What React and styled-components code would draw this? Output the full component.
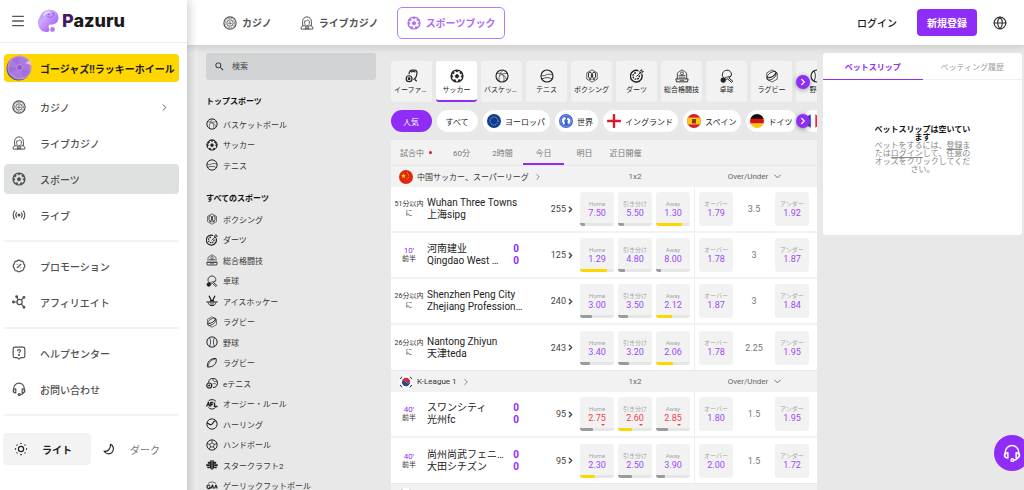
import React from 'react';
import styled, { createGlobalStyle, css } from 'styled-components';
import { Menu, Globe, ChevronRight, ChevronDown, BadgePercent } from 'lucide-react';
import { MdSearch } from 'react-icons/md';

const PURPLE = '#8f2cf5';
const GOLD = '#ffd600';

const GlobalStyle = createGlobalStyle`
    *{
        box-sizing: border-box;
    }
    body{
        margin: 0;
        background: #e8e8e8;
        color: #2b2b2b;
        font-family: Roboto, "Noto Sans CJK JP", "Noto Sans CJK SC", sans-serif;
        font-size: 8px;
        overflow: hidden;
    }
    button, input{
        font: inherit;
        color: inherit;
        border: 0;
        padding: 0;
        background: none;
    }
    button{
        cursor: pointer;
    }
    a{
        color: inherit;
        text-decoration: none;
    }
    ul{
        list-style: none;
        margin: 0;
        padding: 0;
    }
    svg{
        display: block;
        flex-shrink: 0;
    }
`;

/* ---------- icons ---------- */

const hex = 'M12 1.500l9 5.200v10.600l-9 5.200-9-5.200V6.700z';

const shapes = {
    chip: (
        <>
            <circle cx="12" cy="12" r="10.500" />
            <circle cx="12" cy="12" r="8" strokeWidth="1.300" strokeDasharray="2.600 1.600" />
            <circle cx="12" cy="12" r="5.500" strokeWidth="1.500" />
            <path d="M12 9l2.500 4h-5zM12 13v2" strokeWidth="1.200" />
        </>
    ),
    dealer: (
        <>
            <path d="M4.500 17V9a7.500 7.500 0 0 1 15 0v8" strokeWidth="1.700" />
            <path d="M8 13V8.500c2 .5 4.500-.5 5.500-2 .5 1.200 1.500 2 2.500 2V13c0 2-2 3.500-4 3.500S8 15 8 13z" strokeWidth="1.500" />
            <path d="M2 22.500v-3c0-1.500 2-2.500 5-3l5 2.500 5-2.500c3 .5 5 1.500 5 3v3z" strokeWidth="1.700" />
            <path d="M9 19.500l3 1.500 3-1.500v3l-3-1.500-3 1.500z" fill="currentColor" strokeWidth="1" />
        </>
    ),
    soccer: (
        <>
            <circle cx="12" cy="12" r="10.300" />
            <path d="M12 9.200l3 2.200-1.200 3.500h-3.600L9 11.400z" fill="currentColor" strokeWidth="1.400" />
            <path d="M8.500 2.500h7L12 5.200zM21.500 10l-.2 5-2.500-2.300zM2.500 10l.2 5 2.500-2.300zM6 19l4 2.500-1-3.200zM18 19l-4 2.500 1-3.200z" fill="currentColor" strokeWidth="1.400" />
            <path d="M4 6.500l2.500-2 .5 2.500-2 2zM20 6.500l-2.500-2L17 7l2 2z" fill="currentColor" strokeWidth="1.400" />
        </>
    ),
    live: (
        <>
            <path d="M5 4.500c-4 4-4 11 0 15M19 4.500c4 4 4 11 0 15M8.500 7.500c-2.300 2.500-2.300 6.500 0 9M15.500 7.500c2.300 2.500 2.300 6.500 0 9" />
            <circle cx="12" cy="12" r="1.600" fill="currentColor" />
        </>
    ),
    affiliate: (
        <>
            <circle cx="13" cy="12" r="4.500" />
            <path d="M8.500 12H3M10.500 8L8.500 4M16 8.500l4-4M16 15.500l4 4.500" />
            <circle cx="2.500" cy="12" r="1.500" fill="currentColor" />
            <circle cx="8" cy="3" r="1.500" fill="currentColor" />
            <circle cx="20.500" cy="4" r="1.500" fill="currentColor" />
            <circle cx="20.500" cy="21" r="1.500" fill="currentColor" />
        </>
    ),
    help: (
        <>
            <path d="M5 2h14a3 3 0 0 1 3 3v12a3 3 0 0 1-3 3h-4l-3 2.500L9 20H5a3 3 0 0 1-3-3V5a3 3 0 0 1 3-3z" />
            <path d="M9.500 9c0-3.500 5-3.500 5-.5 0 2-2.500 2-2.500 4" />
            <circle cx="12" cy="15.500" r=".8" fill="currentColor" />
        </>
    ),
    headset: (
        <>
            <path d="M3 15v-4a9 9 0 0 1 18 0v4" />
            <path d="M6.500 11.500v7c-3 0-4.500-1.500-4.500-3.500s1.500-3.500 4.500-3.500zM17.500 11.500v7c3 0 4.500-1.500 4.500-3.500s-1.500-3.500-4.500-3.500z" />
            <path d="M20 18c-1 2.500-3 3.500-6 3.500" />
            <circle cx="12.500" cy="21.500" r="1.700" />
        </>
    ),
    sun: (
        <>
            <circle cx="12" cy="12" r="4.500" />
            <path d="M12 1.500v2M12 20.500v2M1.500 12h2M20.500 12h2M4.600 4.600l1.200 1.200M18.200 18.200l1.200 1.200M4.600 19.400l1.200-1.200M18.200 5.800l1.200-1.200" strokeWidth="2.600" />
        </>
    ),
    moon: <path d="M14.500 4a8.500 8.500 0 1 1-11 11.500c6 2 12-4 11-11.500z" />,
    basketball: (
        <>
            <circle cx="12" cy="12" r="10.300" />
            <path d="M3 8c5-2 14 1 17 10M14 2c-5 3-8 10-7 19M9 11c4-3 8-4 12-3M13 10c3 3 3 8 2 11" strokeWidth="1.100" />
        </>
    ),
    tennis: (
        <>
            <circle cx="12" cy="12" r="10.300" />
            <path d="M2 10c5 4 8-1 12-1 3 0 6 0 8 2M3.500 17c5-3 12-3 17 0" strokeWidth="1.300" />
        </>
    ),
    boxing: (
        <>
            <path d={hex} strokeWidth="1.200" />
            <path d="M6 7.500c0-2.500 5-2.500 5 0v7c0 2-5 2-5-1zM13 7.500c0-2.500 5-2.500 5 0v6c0 3-5 3-5 1z" strokeWidth="1.600" />
            <path d="M7 17.500h4M13 17.500h4" />
        </>
    ),
    darts: (
        <>
            <path d="M20 8.500A10 10 0 1 1 14.500 3" strokeWidth="2.400" />
            <path d="M16 11a5.500 5.500 0 1 1-4.500-4.500" strokeWidth="2.400" strokeDasharray="3 1.500" />
            <path d="M11 13l8-8M17 4l3-3v3h3l-3 3h-3z" strokeWidth="1.600" />
        </>
    ),
    mma: (
        <>
            <path d="M4 17V7l4-3 4-2.500L16 4l4 3v10" strokeWidth="1.300" />
            <path d="M1.500 17h21l-1 5h-19z" strokeWidth="1.600" />
            <path d="M6 11h12M6 14h12M8 19.500h8" strokeWidth="1.200" />
            <circle cx="12" cy="7.500" r="2.500" strokeWidth="1.300" />
        </>
    ),
    pingpong: (
        <>
            <path d="M6 15C1 9 6 2 12 2s9 6 7 10l-4 3 7 6-2 2-7-6c-2 1-4 1-6-1z" strokeWidth="1.700" />
            <path d="M8 15L19 12" strokeWidth="1.300" />
            <circle cx="5.500" cy="19" r="3.500" fill="currentColor" />
        </>
    ),
    hockey: (
        <>
            <path d="M6 1.500l5 10h5M18 1.500l-5 10H8" strokeWidth="2.600" />
            <path d="M1 14h22" strokeWidth="2.400" />
            <path d="M5 16c0 7 14 7 14 0M8 18h8M8 21h8" strokeWidth="1.600" />
        </>
    ),
    league: (
        <>
            <path d={hex} strokeWidth="1.200" />
            <path d="M4 16C3 9 11 4 18 4c4 6-3 14-11 15-2 0-3-1-3-3z" strokeWidth="1.600" />
            <path d="M5 15c6 0 12-4 14-9" />
        </>
    ),
    baseball: (
        <>
            <circle cx="12" cy="12" r="10.300" />
            <path d="M7 3.500c3 5 3 12 0 17M17 3.500c-3 5-3 12 0 17" strokeWidth="1.500" />
        </>
    ),
    rugby: (
        <>
            <path d="M3 20C1 11 9 2 20 3c3 9-5 18-17 17z" />
            <path d="M5 19C4 12 10 5 18 4.500" strokeWidth="1.300" />
        </>
    ),
    etennis: (
        <>
            <path d="M5 11a9 9 0 1 1 9 10" />
            <path d="M14 3c-1 5 2 7 8 6M13 14c3-2 6-1 8 1" strokeWidth="1.300" />
            <circle cx="6.500" cy="17" r="5" strokeWidth="2.400" />
            <path d="M4.500 17h4M6.500 15v4" />
        </>
    ),
    esoccer: (
        <>
            <path d="M7 9c0-4 2-7 6-7h4c4 0 4 4 3 8-1 5-2 7-6 8" />
            <path d="M10 5c3-1 5-1 8 0M17 18l3 3" />
            <circle cx="7" cy="16.500" r="5" />
            <circle cx="7" cy="16.500" r="1.500" fill="currentColor" />
        </>
    ),
    afl: (
        <>
            <path d="M4 7c4-5 12-5 16 0M5 19c4 4 10 4 14 0" />
            <path d="M1 17l4-8 2 8M9.500 17V9h5M9.500 13h4M17 9v8h6" strokeWidth="2.800" />
        </>
    ),
    hurling: (
        <>
            <circle cx="12" cy="12" r="10.300" />
            <path d="M2 11c5-1 5 4 9 2s3-8 9-7" strokeWidth="2.400" />
        </>
    ),
    handball: (
        <>
            <circle cx="12" cy="12" r="10.300" />
            <path d="M12 7.500l4.500 3.200-1.700 5.200H9.200L7.500 10.700zM12 2v5.500M22 9l-5.500 1.700M18 20l-3.200-4M6 20l3.200-4M2 9l5.500 1.700" strokeWidth="1.600" />
        </>
    ),
    starcraft: (
        <path d="M9 3h2v18L8 18V9H4V6h5zM15 3h-2v18l3-3V9h4V6h-5zM1 11h6v3H1zM17 11h6v3h-6zM3 16h4v2H3zM17 16h4v2h-4z" fill="currentColor" strokeWidth="1" />
    ),
    gaa: (
        <>
            <path d="M4 7c4-4 12-4 16 0M6 21c4 2 8 2 12 0" strokeWidth="1.300" />
            <path d="M8 11c-4-2-6 0-6 3s4 4 6 2v-2H6M10 17l3-7 2 7M17 17l3-7 2.500 7" strokeWidth="2.400" />
        </>
    ),
};

const Icon = ({ name, size = 12 }) => (
    <svg width={size} height={size} viewBox="0 0 24 24" fill="none" stroke="currentColor" strokeWidth="2" strokeLinejoin="round" aria-hidden="true">
        {shapes[name]}
    </svg>
);

const flags = {
    eu: (
        <>
            <rect width="14" height="14" fill="#0b3b9c" />
            <circle cx="7" cy="7" r="4" fill="none" stroke="#e8c93a" strokeWidth="1" strokeDasharray="1 1.100" />
        </>
    ),
    world: (
        <>
            <rect width="14" height="14" fill="#3b66d6" />
            <path d="M3 5l2-2 2 1-1 2-1 1 1 2-1 2-2-3zM8.500 3.500L11 5l.5 2.500L10 10.500 8.500 8.500l.5-2-1-1z" fill="#fff" />
            <circle cx="7" cy="7" r="5.500" fill="none" stroke="#9db5f0" strokeWidth=".6" />
        </>
    ),
    england: (
        <>
            <rect width="14" height="14" fill="#fff" />
            <path d="M5.800 0h2.400v14H5.800zM0 5.800h14v2.400H0z" fill="#d8192f" />
        </>
    ),
    spain: (
        <>
            <rect width="14" height="14" fill="#d8192f" />
            <rect y="3.500" width="14" height="7" fill="#fbc712" />
            <path d="M5 5h4v4.500H5z" fill="#8c3b14" />
        </>
    ),
    germany: (
        <>
            <rect width="14" height="5" fill="#111" />
            <rect y="4.700" width="14" height="5" fill="#dd1010" />
            <rect y="9.300" width="14" height="5" fill="#fbc712" />
        </>
    ),
    france: (
        <>
            <rect width="14" height="14" fill="#fff" />
            <rect width="4.700" height="14" fill="#2346a0" />
            <rect x="9.300" width="4.700" height="14" fill="#f0283c" />
        </>
    ),
    china: (
        <>
            <rect width="14" height="14" fill="#de2910" />
            <path d="M4.500 3.500l.7 1.500 1.600.2-1.200 1.100.3 1.600-1.400-.8-1.400.8.300-1.600-1.200-1.100 1.600-.2z" fill="#ffde00" />
            <path d="M8 2.500h1v1H8zM9 4.500h1v1H9zM9 7h1v1H9zM7.500 8.500h1v1h-1z" fill="#ffb000" />
        </>
    ),
    korea: (
        <>
            <rect width="14" height="14" fill="#fff" />
            <path d="M2.800 7a4.200 4.200 0 0 1 8.400 0c-1 2-3 1.500-4.200 0s-3.200-2-4.200 0z" fill="#cd2e3a" />
            <path d="M2.800 7c1-2 3-1.500 4.200 0s3.200 2 4.200 0a4.200 4.200 0 0 1-8.400 0z" fill="#204a9c" />
            <path d="M1 4l2-2.500M11 1.500L13 4M1 10l2 2.500M11 12.500l2-2.500" stroke="#222" strokeWidth="1.200" />
        </>
    ),
};

const FlagSvg = styled.svg`
    width: 14px;
    height: 14px;
    border-radius: 50%;
`;

const Flag = ({ name }) => (
    <FlagSvg viewBox="0 0 14 14" aria-hidden="true">
        {flags[name]}
    </FlagSvg>
);

const LogoMark = () => (
    <svg width="22" height="24" viewBox="0 0 22 24" aria-hidden="true">
        <defs>
            <linearGradient id="blob" x1="0" y1="0" x2="1" y2="1">
                <stop offset="0" stopColor="#8ea4ff" />
                <stop offset=".35" stopColor="#d0a6ff" />
                <stop offset=".7" stopColor="#b072f5" />
                <stop offset="1" stopColor="#8a3be8" />
            </linearGradient>
        </defs>
        <path d="M11 1c6-1 10.500 2.500 10.500 7.500S18 15.500 14.500 15.500c-3 0-3.500 1.500-2.500 3.500s0 4-2 4C4 23.500 1 18.500 1 13.500 1 10 2.500 9 3.500 6.500S7 1.500 11 1z" fill="url(#blob)" />
        <path d="M7 6c1-2 3-3 5-3" stroke="#f1e4ff" strokeWidth="1.500" fill="none" strokeLinecap="round" />
        <path d="M10 7c2 2 5 2 7-1" stroke="#8a5ae0" strokeWidth="1" fill="none" strokeLinecap="round" />
        <circle cx="11.500" cy="5.500" r="1" fill="#7a6ae0" />
        <circle cx="16" cy="4.500" r="1" fill="#7a6ae0" />
        <circle cx="15.500" cy="20.500" r="2.400" fill="#b878f5" />
    </svg>
);

const Wheel = () => (
    <svg width="26" height="26" viewBox="0 0 26 26" aria-hidden="true">
        <circle cx="12.500" cy="13.500" r="12" fill="#5c55b0" />
        <circle cx="13.500" cy="12.500" r="12" fill="#b98fd8" />
        <circle cx="13.500" cy="12.500" r="10.800" fill="#a97ae0" stroke="#d3a988" strokeWidth="1" strokeDasharray="1 1" />
        <path d="M13.500 12.500L6 5a11 11 0 0 1 7.500-3zM13.500 12.500L24 16a11 11 0 0 1-6 6zM13.500 12.500L4 18a11 11 0 0 1-1.500-6z" fill="#9f70e2" />
        <circle cx="13.500" cy="12.500" r="3" fill="#8a5ad8" stroke="#d8a0c8" strokeWidth=".8" />
        <path d="M19 8l6-3v5z" fill="#e9c6d8" />
    </svg>
);

/* ---------- layout ---------- */

const Page = styled.div`
    display: grid;
    grid-template-columns: 187px minmax(0, 1fr);
    height: 100vh;
    overflow: hidden;
`;

const Sidebar = styled.aside`
    position: relative;
    z-index: 2;
    background: #fff;
    box-shadow: 2px 0 10px rgba(0, 0, 0, 0.2);
`;

const Brand = styled.div`
    display: flex;
    align-items: center;
    height: 43px;
    padding-left: 10px;
    border-bottom: 1px solid #eee;
    color: #555;
`;

const BrandLink = styled.a`
    display: flex;
    align-items: center;
    gap: 3px;
    margin-left: 11px;
    color: #1a1a1a;
    font: 800 18px/24px Inter, sans-serif;

    span::first-letter{
        color: #431a63;
    }
    span{
        display: block;
    }
`;

const Banner = styled.a`
    display: flex;
    align-items: center;
    gap: 8px;
    height: 28px;
    margin: 11px 8px 10px 4px;
    padding-left: 2px;
    border-radius: 4px;
    background: ${GOLD};
    color: #1d1d1d;
    font-size: 10px;
    font-weight: 700;
    white-space: nowrap;
`;

const NavGroup = styled.nav`
    display: grid;
    gap: 6px;
    margin: 0 8px 9px 4px;
    padding-bottom: 10px;
    border-bottom: 2px solid #f2f2f2;
`;

const NavItem = styled.a`
    display: flex;
    align-items: center;
    gap: 14px;
    height: 30px;
    padding: 0 9px 0 8px;
    border-radius: 4px;
    background: ${(p) => (p.$active ? '#dfe1e0' : 'none')};
    color: #505050;
    font-size: 10px;
    font-weight: 500;

    span{
        flex: 1;
    }
`;

const ThemeSwitch = styled.div`
    display: flex;
    margin: 17px 8px 0 3px;
`;

const ThemeButton = styled.button`
    display: flex;
    align-items: center;
    gap: 14px;
    width: 88px;
    height: 32px;
    padding-left: 11px;
    border-radius: 4px;
    background: ${(p) => (p.$active ? '#f3f3f3' : 'none')};
    color: #222;
    font-size: 10px;
    font-weight: ${(p) => (p.$active ? 700 : 400)};

    span{
        color: ${(p) => (p.$active ? '#222' : '#777')};
    }
`;

const Main = styled.div`
    display: flex;
    flex-direction: column;
    min-width: 0;
`;

const TopBar = styled.header`
    position: relative;
    z-index: 1;
    display: flex;
    align-items: center;
    flex-shrink: 0;
    height: 45px;
    padding: 0 17px 0 26px;
    background: #fff;
    box-shadow: 0 2px 8px rgba(0, 0, 0, 0.14);
`;

const TopLink = styled.a`
    display: flex;
    align-items: center;
    gap: 5px;
    height: 32px;
    padding: 0 9px;
    border: 1px solid transparent;
    border-radius: 5px;
    margin-right: 8px;
    color: #555;
    font-size: 10px;
    font-weight: 700;

    ${(p) => p.$active && css`
        border-color: #b57bfa;
        color: #ad6bf9;
    `}
`;

const Account = styled.div`
    display: flex;
    align-items: center;
    gap: 16px;
    margin-left: auto;
    color: #333;
`;

const LoginButton = styled.button`
    padding: 0 4px;
    color: #1a1a1a;
    font-size: 10px;
    font-weight: 500;
`;

const SignUpButton = styled.button`
    height: 27px;
    padding: 0 10px;
    border-radius: 4px;
    background: ${PURPLE};
    color: #fff;
    font-size: 10px;
    font-weight: 700;
`;

const Content = styled.main`
    display: flex;
    align-items: flex-start;
    flex: 1;
    min-height: 0;
    padding: 8px 2px 0 8px;
    border-left: 11px solid #eee;
`;

/* ---------- sports menu ---------- */

const SportsMenu = styled.aside`
    width: 170px;
    flex-shrink: 0;
    margin-right: 15px;
`;

const SearchBox = styled.label`
    display: flex;
    align-items: center;
    gap: 7px;
    height: 27px;
    padding: 0 8px;
    border-radius: 3px;
    background: #d1d3d4;

    input{
        width: 100%;
        outline: 0;
    }
    input::placeholder{
        color: #444;
        opacity: 1;
    }
`;

const MenuTitle = styled.h2`
    margin: 12px 0 2px;
    color: #111;
    font-size: 8px;
    font-weight: 700;
    line-height: 20px;

    ul + &{
        margin: 14px 0 0;
    }
`;

const MenuRow = styled.li`
    display: flex;
    align-items: center;
    height: 20px;

    &:nth-child(even){
        height: 21px;
    }
    a{
        display: flex;
        align-items: center;
        gap: 5px;
        color: #333;
    }
    svg{
        color: #222;
    }
`;

/* ---------- events ---------- */

const Events = styled.section`
    flex: 1;
    min-width: 0;
    padding-top: 8px;
`;

const Scroller = styled.div`
    position: relative;
    margin-bottom: 8px;
`;

const Strip = styled.div`
    display: flex;
    gap: ${(p) => p.$gap}px;
    overflow: hidden;
`;

const NextButton = styled.button`
    position: absolute;
    top: 50%;
    right: 7px;
    display: grid;
    place-items: center;
    width: 14px;
    height: 14px;
    margin-top: -7px;
    border-radius: 50%;
    background: ${PURPLE};
    box-shadow: 0 1px 5px rgba(0, 0, 0, 0.4);
    color: #fff;
`;

const SportTile = styled.button`
    display: flex;
    flex-direction: column;
    align-items: center;
    flex: 0 0 41px;
    min-width: 0;
    height: 41px;
    padding: 8px 3px 0;
    border-radius: 3px;
    border-bottom: 2px solid ${(p) => (p.$active ? PURPLE : 'transparent')};
    background: ${(p) => (p.$active ? '#fff' : '#f2f2f2')};
    color: #222;
    font-size: 7px;
    line-height: 10px;

    span{
        max-width: 100%;
        margin-top: 2px;
        overflow: hidden;
        white-space: nowrap;
        text-overflow: ellipsis;
    }
`;

const Pill = styled.button`
    display: flex;
    align-items: center;
    justify-content: center;
    flex-shrink: 0;
    gap: 4px;
    height: 22px;
    min-width: 41px;
    padding: 0 5px 0 4px;
    border-radius: 11px;
    background: ${(p) => (p.$active ? PURPLE : '#fff')};
    color: ${(p) => (p.$active ? '#fff' : '#222')};
    white-space: nowrap;
`;

const Tabs = styled.div`
    display: flex;
    height: 25px;
    border-radius: 3px 3px 0 0;
    background: #f2f2f2;
`;

const Tab = styled.button`
    display: flex;
    align-items: center;
    justify-content: center;
    gap: 5px;
    min-width: 41px;
    padding-top: 2px;
    border-bottom: 2px solid ${(p) => (p.$active ? PURPLE : 'transparent')};
    color: #777;
    white-space: nowrap;

    &:first-child{
        min-width: 50px;
    }
`;

const LiveDot = styled.i`
    width: 3px;
    height: 3px;
    border-radius: 50%;
    background: #e8112d;
`;

const rowColumns = css`
    display: grid;
    grid-template-columns: minmax(0, 1fr) 118px 123px;
    align-items: center;
`;

const LeagueBar = styled.header`
    ${rowColumns}
    height: 22px;
    border-top: 1px solid #e8e8e8;
    background: #f2f2f2;
    color: #666;
    text-align: center;
`;

const LeagueLink = styled.a`
    display: flex;
    align-items: center;
    gap: 4px;
    padding-left: 8px;
    color: #333;

    svg:last-child{
        color: #777;
    }
`;

const MarketName = styled.span`
    display: flex;
    align-items: center;
    justify-content: center;
    gap: 4px;
`;

const MatchRow = styled.article`
    ${rowColumns}
    height: 46px;
    border-bottom: 2px solid #f2f2f2;
    background: #fff;

    &:last-child{
        height: 45px;
        border-bottom: 0;
    }
`;

const MatchInfo = styled.div`
    display: grid;
    grid-template-columns: 36px minmax(0, 77px) 24px minmax(34px, 1fr);
    align-items: center;
`;

const MatchTime = styled.div`
    padding: 0 2px;
    font-size: 7px;
    line-height: 9px;
    text-align: center;
    color: #333;

    em{
        display: block;
        font-style: normal;
        font-size: 8px;
        color: ${PURPLE};
    }
`;

const Teams = styled.div`
    grid-column: ${(p) => (p.$wide ? 'span 2' : 'auto')};
    padding-right: ${(p) => (p.$wide ? '4px' : 0)};
    font-size: 10px;
    line-height: 12px;
    color: #222;

    div{
        overflow: hidden;
        white-space: nowrap;
        text-overflow: ellipsis;
    }
`;

const Score = styled.div`
    font-size: 10px;
    font-weight: 700;
    line-height: 12px;
    text-align: center;
    color: ${PURPLE};
`;

const MoreLink = styled.a`
    display: flex;
    align-items: center;
    justify-content: flex-end;
    padding-right: 1px;
    color: #444;
    font-size: 9px;
`;

const Outcomes = styled.div`
    display: flex;
    align-items: center;
    gap: 4px;
    height: 100%;
    padding-left: 4px;
`;

const Totals = styled.div`
    display: grid;
    grid-template-columns: 34px minmax(0, 1fr) 34px;
    align-items: center;
    height: 100%;
    padding: 0 8px 0 4px;
    border-left: 1px solid #eee;
    color: #777;
    font-size: 9px;
    text-align: center;
`;

const OddButton = styled.button`
    position: relative;
    display: flex;
    flex-direction: column;
    align-items: center;
    flex: 0 0 34px;
    height: 34px;
    padding-top: 7px;
    border-radius: 3px;
    background: #f2f2f2;
    overflow: hidden;
    white-space: nowrap;
`;

const OddLabel = styled.span`
    color: #a5a5a5;
    font-size: 6px;
    line-height: 9px;
`;

const OddValue = styled.span`
    color: ${(p) => (p.$falling ? '#f4414d' : '#9a4bf5')};
    font-size: 9px;
    line-height: 11px;
`;

const Falling = styled.i`
    position: absolute;
    right: 9px;
    bottom: 5px;
    border: 2px solid transparent;
    border-top-color: #f4414d;
    border-bottom: 0;
`;

const Share = styled.i`
    position: absolute;
    left: 0;
    right: 0;
    bottom: 0;
    height: 3px;
    background: #e6e6e6;

    b{
        display: block;
        height: 3px;
        border-radius: 0 1px 1px 0;
        background: ${(p) => (p.$top ? GOLD : '#9b9b9b')};
    }
`;

/* ---------- bet slip ---------- */

const BetSlip = styled.aside`
    flex: 0 0 199px;
    min-height: 182px;
    margin-left: 6px;
    border-radius: 3px;
    background: #fff;
`;

const SlipTabs = styled.div`
    display: grid;
    grid-template-columns: 1fr 1fr;
`;

const SlipTab = styled.button`
    height: 27px;
    border-bottom: ${(p) => (p.$active ? `1px solid ${PURPLE}` : '1px solid #eee')};
    color: ${(p) => (p.$active ? PURPLE : '#a0a0a0')};
    font-weight: ${(p) => (p.$active ? 700 : 400)};
`;

const EmptySlip = styled.div`
    width: 98px;
    margin: 46px auto 0;
    color: #888;
    line-height: 8px;
    text-align: center;

    h3{
        margin: 0;
        color: #111;
        font-size: 8px;
    }
    p{
        margin: 0;
    }
    a{
        text-decoration: underline;
    }
`;

const SupportButton = styled.button`
    position: fixed;
    z-index: 3;
    right: -6px;
    bottom: 19px;
    display: grid;
    place-items: center;
    width: 36px;
    height: 36px;
    border-radius: 50%;
    background: ${PURPLE};
    color: #fff;
`;

/* ---------- data ---------- */

const navGroups = [
    [
        { icon: 'chip', label: 'カジノ', more: true },
        { icon: 'dealer', label: 'ライブカジノ' },
        { icon: 'soccer', label: 'スポーツ', active: true },
        { icon: 'live', label: 'ライブ' },
    ],
    [
        { icon: 'promo', label: 'プロモーション' },
        { icon: 'affiliate', label: 'アフィリエイト' },
    ],
    [
        { icon: 'help', label: 'ヘルプセンター' },
        { icon: 'headset', label: 'お問い合わせ' },
    ],
];

const topSports = [
    ['basketball', 'バスケットボール'],
    ['soccer', 'サッカー'],
    ['tennis', 'テニス'],
];

const allSports = [
    ['boxing', 'ボクシング'],
    ['darts', 'ダーツ'],
    ['mma', '総合格闘技'],
    ['pingpong', '卓球'],
    ['hockey', 'アイスホッケー'],
    ['league', 'ラグビー'],
    ['baseball', '野球'],
    ['rugby', 'ラグビー'],
    ['etennis', 'eテニス'],
    ['afl', 'オージー・ルール'],
    ['hurling', 'ハーリング'],
    ['handball', 'ハンドボール'],
    ['starcraft', 'スタークラフト2'],
    ['gaa', 'ゲーリックフットボール'],
];

const tiles = [
    ['esoccer', 'イーファイト'],
    ['soccer', 'サッカー'],
    ['basketball', 'バスケットボール'],
    ['tennis', 'テニス'],
    ['boxing', 'ボクシング'],
    ['darts', 'ダーツ'],
    ['mma', '総合格闘技'],
    ['pingpong', '卓球'],
    ['league', 'ラグビー'],
    ['baseball', '野球'],
];

const regions = [
    [null, '人気'],
    [null, 'すべて'],
    ['eu', 'ヨーロッパ'],
    ['world', '世界'],
    ['england', 'イングランド'],
    ['spain', 'スペイン'],
    ['germany', 'ドイツ'],
    ['france', 'フランス'],
];

const periods = ['試合中', '60分', '2時間', '今日', '明日', '近日開催'];

const leagues = [
    {
        flag: 'china',
        name: '中国サッカー、スーパーリーグ',
        matches: [
            { soon: '51分以内に', teams: ['Wuhan Three Towns', '上海sipg'], more: 255, odds: ['7.50', '5.50', '1.30'], share: [14, 18, 76], over: '1.79', line: '3.5', under: '1.92' },
            { clock: "10'", teams: ['河南建业', 'Qingdao West Coast'], score: [0, 0], more: 125, odds: ['1.29', '4.80', '8.00'], share: [80, 22, 14], over: '1.78', line: '3', under: '1.87' },
            { soon: '26分以内に', teams: ['Shenzhen Peng City', 'Zhejiang Professional FC'], more: 240, odds: ['3.00', '3.50', '2.12'], share: [34, 30, 48], over: '1.87', line: '3', under: '1.84' },
            { soon: '26分以内に', teams: ['Nantong Zhiyun', '天津teda'], more: 243, odds: ['3.40', '3.20', '2.06'], share: [29, 32, 50], over: '1.78', line: '2.25', under: '1.95' },
        ],
    },
    {
        flag: 'korea',
        name: 'K-League 1',
        matches: [
            { clock: "40'", teams: ['スワンシティ', '光州fc'], score: [0, 0], more: 95, falling: true, odds: ['2.75', '2.60', '2.85'], share: [37, 40, 36], over: '1.80', line: '1.5', under: '1.95' },
            { clock: "40'", teams: ['尚州尚武フェニックス', '大田シチズン'], score: [0, 0], more: 95, odds: ['2.30', '2.50', '3.90'], share: [44, 41, 26], over: '2.00', line: '1.5', under: '1.72' },
        ],
    },
    { flag: 'korea', name: '', matches: [] },
];

const outcomeLabels = ['Home', '引き分け', 'Away'];

/* ---------- parts ---------- */

const SportList = ({ title, items }) => (
    <>
        <MenuTitle>{title}</MenuTitle>
        <ul>
            {items.map(([icon, label]) => (
                <MenuRow key={icon}>
                    <a href="#">
                        <Icon name={icon} />
                        {label}
                    </a>
                </MenuRow>
            ))}
        </ul>
    </>
);

const Odd = ({ label, value, share, top, falling }) => (
    <OddButton>
        <OddLabel>{label}</OddLabel>
        <OddValue $falling={falling}>{value}</OddValue>
        {falling && <Falling />}
        {share && (
            <Share $top={top}>
                <b style={{ width: `${share}%` }} />
            </Share>
        )}
    </OddButton>
);

const Match = ({ match }) => {
    const best = Math.max(...match.share);

    return (
        <MatchRow>
            <MatchInfo>
                <MatchTime>
                    {match.clock ? <><em>{match.clock}</em>前半</> : match.soon}
                </MatchTime>
                <Teams $wide={!match.score}>
                    <div>{match.teams[0]}</div>
                    <div>{match.teams[1]}</div>
                </Teams>
                {match.score && (
                    <Score>
                        <div>{match.score[0]}</div>
                        <div>{match.score[1]}</div>
                    </Score>
                )}
                <MoreLink href="#">
                    {match.more}
                    <ChevronRight size={9} strokeWidth={4} />
                </MoreLink>
            </MatchInfo>
            <Outcomes>
                {match.odds.map((value, i) => (
                    <Odd
                        key={outcomeLabels[i]}
                        label={outcomeLabels[i]}
                        value={value}
                        share={match.share[i]}
                        top={match.share[i] === best}
                        falling={match.falling}
                    />
                ))}
            </Outcomes>
            <Totals>
                <Odd label="オーバー" value={match.over} />
                <span>{match.line}</span>
                <Odd label="アンダー" value={match.under} />
            </Totals>
        </MatchRow>
    );
};

const League = ({ league }) => (
    <section>
        <LeagueBar>
            <LeagueLink href="#">
                <Flag name={league.flag} />
                {league.name}
                <ChevronRight size={10} strokeWidth={2} />
            </LeagueLink>
            <MarketName>1x2</MarketName>
            <MarketName>
                Over/Under
                <ChevronDown size={11} strokeWidth={2} />
            </MarketName>
        </LeagueBar>
        {league.matches.map((match) => (
            <Match key={match.teams[0]} match={match} />
        ))}
    </section>
);

const App = () => (
    <Page>
        <GlobalStyle />
        <Sidebar>
            <Brand>
                <button aria-label="menu"><Menu size={16} /></button>
                <BrandLink href="#">
                    <LogoMark />
                    <span>Pazuru</span>
                </BrandLink>
            </Brand>
            <Banner href="#">
                <Wheel />
                ゴージャズ!!ラッキーホイール
            </Banner>
            {navGroups.map((group) => (
                <NavGroup key={group[0].label}>
                    {group.map((item) => (
                        <NavItem key={item.label} href="#" $active={item.active}>
                            {item.icon === 'promo' ? <BadgePercent size={14} /> : <Icon name={item.icon} size={14} />}
                            <span>{item.label}</span>
                            {item.more && <ChevronRight size={11} />}
                        </NavItem>
                    ))}
                </NavGroup>
            ))}
            <ThemeSwitch>
                <ThemeButton $active>
                    <Icon name="sun" size={14} />
                    <span>ライト</span>
                </ThemeButton>
                <ThemeButton>
                    <Icon name="moon" size={14} />
                    <span>ダーク</span>
                </ThemeButton>
            </ThemeSwitch>
        </Sidebar>

        <Main>
            <TopBar>
                <TopLink href="#"><Icon name="chip" size={14} />カジノ</TopLink>
                <TopLink href="#"><Icon name="dealer" size={14} />ライブカジノ</TopLink>
                <TopLink href="#" $active><Icon name="soccer" size={14} />スポーツブック</TopLink>
                <Account>
                    <LoginButton>ログイン</LoginButton>
                    <SignUpButton>新規登録</SignUpButton>
                    <Globe size={14} strokeWidth={2} />
                </Account>
            </TopBar>

            <Content>
                <SportsMenu>
                    <SearchBox>
                        <MdSearch size={11} />
                        <input type="text" placeholder="検索" aria-label="検索" />
                    </SearchBox>
                    <SportList title="トップスポーツ" items={topSports} />
                    <SportList title="すべてのスポーツ" items={allSports} />
                </SportsMenu>

                <Events>
                    <Scroller>
                        <Strip $gap={4}>
                            {tiles.map(([icon, label]) => (
                                <SportTile key={label} $active={label === 'サッカー'}>
                                    <Icon name={icon} size={14} />
                                    <span>{label}</span>
                                </SportTile>
                            ))}
                        </Strip>
                        <NextButton aria-label="next"><ChevronRight size={10} strokeWidth={3} /></NextButton>
                    </Scroller>
                    <Scroller>
                        <Strip $gap={5}>
                            {regions.map(([flag, label]) => (
                                <Pill key={label} $active={label === '人気'}>
                                    {flag && <Flag name={flag} />}
                                    {label}
                                </Pill>
                            ))}
                        </Strip>
                        <NextButton aria-label="next"><ChevronRight size={10} strokeWidth={3} /></NextButton>
                    </Scroller>
                    <Tabs>
                        {periods.map((period) => (
                            <Tab key={period} $active={period === '今日'}>
                                {period}
                                {period === '試合中' && <LiveDot />}
                            </Tab>
                        ))}
                    </Tabs>
                    {leagues.map((league) => (
                        <League key={league.name} league={league} />
                    ))}
                </Events>

                <BetSlip>
                    <SlipTabs>
                        <SlipTab $active>ベットスリップ</SlipTab>
                        <SlipTab>ベッティング履歴</SlipTab>
                    </SlipTabs>
                    <EmptySlip>
                        <h3>ベットスリップは空いています</h3>
                        <p>
                            ベットをするには、<a href="#">登録</a>または<a href="#">ログイン</a>して、任意のオッズをクリックしてください。
                        </p>
                    </EmptySlip>
                </BetSlip>
            </Content>
        </Main>
        <SupportButton aria-label="support"><Icon name="headset" size={18} /></SupportButton>
    </Page>
);

export default App;
